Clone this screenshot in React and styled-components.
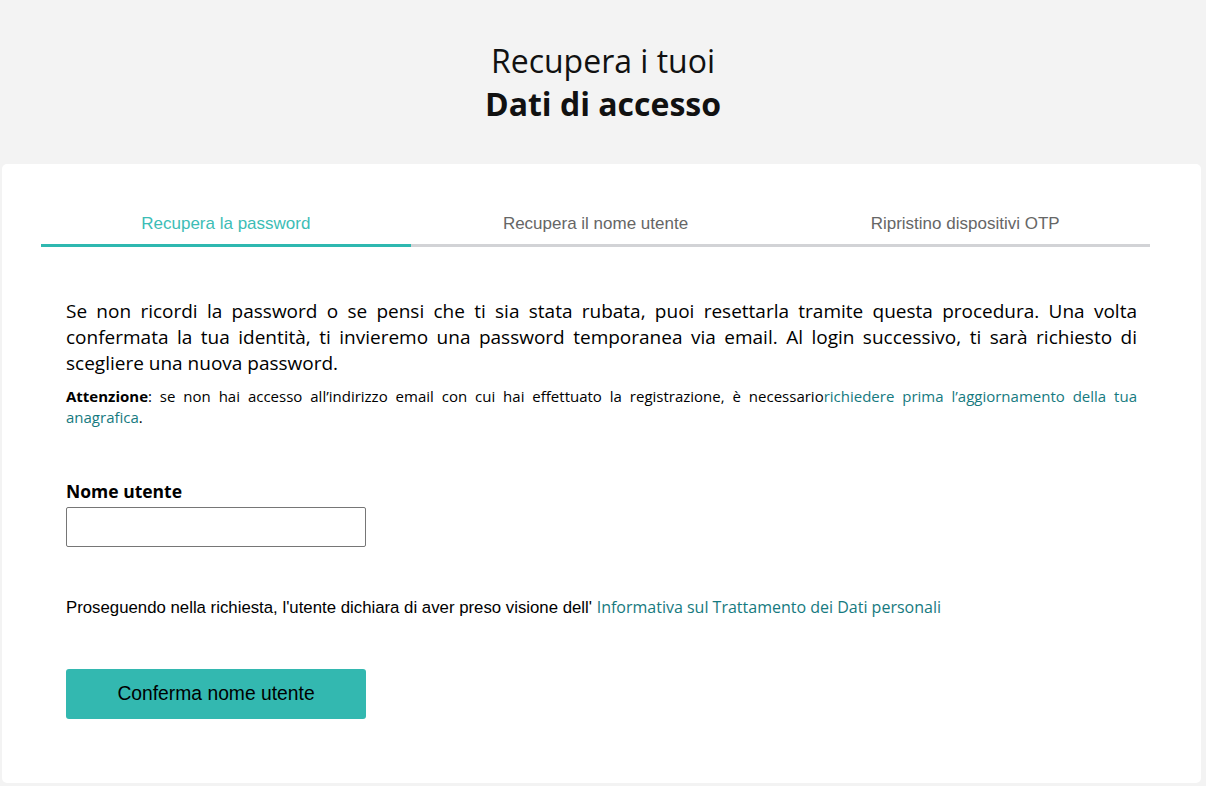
import styled, { createGlobalStyle } from 'styled-components'

const GlobalStyle = createGlobalStyle`
  html, body {
    margin: 0;
    padding: 0;
    background: #f3f3f3;
    font-family: 'Open Sans', sans-serif;
    color: #000;
  }
`

const Header = styled.header`
  padding: 39px 0 39px;
  text-align: center;
  font-size: 32px;
  line-height: 43px;
  color: #111;
`

const Title = styled.div`
  font-weight: ${(p) => (p.$bold ? 700 : 400)};
`

const Card = styled.main`
  margin: 0 5px 0 2px;
  background: #fff;
  border-radius: 5px;
  padding: 50px 0 64px;
  height: 619px;
  box-sizing: border-box;
`

const Tabs = styled.nav`
  display: grid;
  grid-template-columns: repeat(3, 1fr);
  margin: 0 0 0 39px;
  width: 1109px;
`

const Tab = styled.div`
  font-family: 'Liberation Sans', Arial, sans-serif;
  font-size: 17px;
  line-height: 20px;
  text-align: center;
  padding-bottom: 10px;
  color: ${(p) => (p.$active ? '#3cbdb6' : '#666')};
  border-bottom: 3px solid ${(p) => (p.$active ? '#2fb8b0' : '#d2d3d6')};
`

const Body = styled.section`
  padding: 51px 64px 0;
`

const Intro = styled.p`
  margin: 0;
  font-size: 19px;
  line-height: 26px;
  text-align: justify;
`

const Note = styled.p`
  margin: 10px 0 0;
  font-size: 15px;
  line-height: 21px;
  text-align: justify;
`

const Link = styled.a`
  color: #167a80;
  text-decoration: none;
`

const Field = styled.div`
  margin-top: 51px;
  display: flex;
  flex-direction: column;
  gap: 4px;
`

const Label = styled.label`
  font-size: 17.5px;
  line-height: 24px;
  font-weight: 700;
`

const Input = styled.input`
  width: 300px;
  height: 40px;
  box-sizing: border-box;
  border: 1px solid #767676;
  border-radius: 2px;
  font-size: 16px;
  padding: 0 8px;
`

const Privacy = styled.p`
  margin: 49px 0 0;
  font-size: 16px;
  line-height: 22px;
`

const Narrow = styled.span`
  font-family: 'Liberation Sans', Arial, sans-serif;
  font-size: 16.8px;
`

const Button = styled.button`
  display: block;
  margin-top: 50px;
  width: 300px;
  height: 50px;
  border: none;
  border-radius: 3px;
  background: #33b8b0;
  color: #000;
  font-family: 'Liberation Sans', Arial, sans-serif;
  font-size: 19.3px;
  cursor: pointer;
`

export default function App() {
  return (
    <>
      <GlobalStyle />
      <Header>
        <Title>Recupera i tuoi</Title>
        <Title $bold>Dati di accesso</Title>
      </Header>
      <Card>
        <Tabs>
          <Tab $active>Recupera la password</Tab>
          <Tab>Recupera il nome utente</Tab>
          <Tab>Ripristino dispositivi OTP</Tab>
        </Tabs>
        <Body>
          <Intro>
            Se non ricordi la password o se pensi che ti sia stata rubata, puoi resettarla tramite questa
            procedura. Una volta confermata la tua identità, ti invieremo una password temporanea via email.
            Al login successivo, ti sarà richiesto di scegliere una nuova password.
          </Intro>
          <Note>
            <b>Attenzione</b>: se non hai accesso all’indirizzo email con cui hai effettuato la registrazione,
            è necessario<Link href="#">richiedere prima l’aggiornamento della tua anagrafica</Link>.
          </Note>
          <Field>
            <Label htmlFor="username">Nome utente</Label>
            <Input id="username" type="text" />
          </Field>
          <Privacy>
            <Narrow>Proseguendo nella richiesta, l'utente dichiara di aver preso visione dell' </Narrow>
            <Link href="#">Informativa sul Trattamento dei Dati personali</Link>
          </Privacy>
          <Button>Conferma nome utente</Button>
        </Body>
      </Card>
    </>
  )
}
